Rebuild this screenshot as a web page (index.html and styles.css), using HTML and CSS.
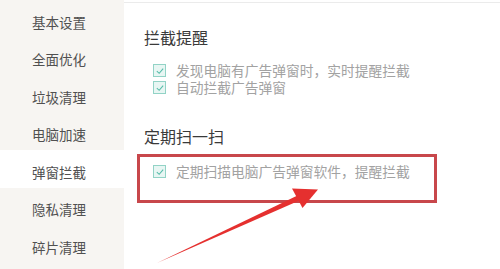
FILE: index.html
```html
<!DOCTYPE html>
<html lang="zh-CN">
<head>
<meta charset="utf-8">
<link rel="stylesheet" href="styles.css">
</head>
<body>
<div class="app">
  <nav class="sidebar">
    <div class="nav-item">基本设置</div>
    <div class="nav-item">全面优化</div>
    <div class="nav-item">垃圾清理</div>
    <div class="nav-item">电脑加速</div>
    <div class="nav-item active">弹窗拦截</div>
    <div class="nav-item">隐私清理</div>
    <div class="nav-item">碎片清理</div>
  </nav>
  <main class="content">
    <h2 class="section-title">拦截提醒</h2>
    <label class="option first"><span class="check"><svg viewBox="0 0 12 12" width="10" height="10"><path d="M2.2 6.2 L5 8.8 L9.8 3.2" fill="none" stroke="#56bca9" stroke-width="1.3"/></svg></span><span class="option-text">发现电脑有广告弹窗时，实时提醒拦截</span></label>
    <label class="option"><span class="check"><svg viewBox="0 0 12 12" width="10" height="10"><path d="M2.2 6.2 L5 8.8 L9.8 3.2" fill="none" stroke="#56bca9" stroke-width="1.3"/></svg></span><span class="option-text">自动拦截广告弹窗</span></label>
    <h2 class="section-title second">定期扫一扫</h2>
    <label class="option scan"><span class="check"><svg viewBox="0 0 12 12" width="10" height="10"><path d="M2.2 6.2 L5 8.8 L9.8 3.2" fill="none" stroke="#56bca9" stroke-width="1.3"/></svg></span><span class="option-text">定期扫描电脑广告弹窗软件，提醒拦截</span></label>
  </main>
  <div class="highlight"></div>
  <svg class="arrow" width="500" height="269" viewBox="0 0 500 269">
    <polygon points="157,263 297,195.8 299.4,200.6" fill="#e5302f"/>
    <polygon points="292,188.5 318,189.5 302.5,208" fill="#e5302f"/>
  </svg>
</div>
</body>
</html>
```

FILE: styles.css
```css
html, body {
  margin: 0;
  padding: 0;
  background: #ffffff;
}
body {
  font-family: "Noto Sans CJK SC", "Noto Sans", sans-serif;
  width: 500px;
  height: 269px;
  overflow: hidden;
}
.app {
  position: relative;
  display: flex;
  width: 500px;
  height: 269px;
}
.sidebar {
  width: 124px;
  flex: none;
  background: #f7f5f2;
  display: flex;
  flex-direction: column;
}
.nav-item {
  height: 37.5px;
  box-sizing: border-box;
  padding: 6px 0 0 32px;
  display: flex;
  align-items: center;
  font-size: 13.5px;
  color: #505050;
}
.nav-item.active {
  background: #ffffff;
}
.content {
  flex: 1;
  margin-top: 2px;
  border-top: 1px solid #ebebeb;
  padding: 24px 0 0 20px;
  display: flex;
  flex-direction: column;
  align-items: flex-start;
}
.section-title {
  margin: 0;
  font-size: 16px;
  line-height: 20px;
  font-weight: normal;
  color: #3a3a3a;
}
.section-title.second {
  margin-top: 30px;
}
.option {
  display: flex;
  align-items: center;
  height: 17px;
  margin-left: 9px;
}
.option.first {
  margin-top: 15px;
}
.option.scan {
  margin-top: 17px;
}
.check {
  width: 11px;
  height: 11px;
  border: 1px solid #92d3c6;
  background: #e8f6f3;
  display: flex;
  align-items: center;
  justify-content: center;
  margin-right: 10px;
  flex: none;
}
.option-text {
  font-size: 13.75px;
  line-height: 17px;
  color: #a2a2a2;
  white-space: nowrap;
}
.highlight {
  position: absolute;
  left: 137px;
  top: 154px;
  width: 300px;
  height: 49px;
  box-sizing: border-box;
  border: 3px solid #c8474b;
}
.arrow {
  position: absolute;
  left: 0;
  top: 0;
}
```
